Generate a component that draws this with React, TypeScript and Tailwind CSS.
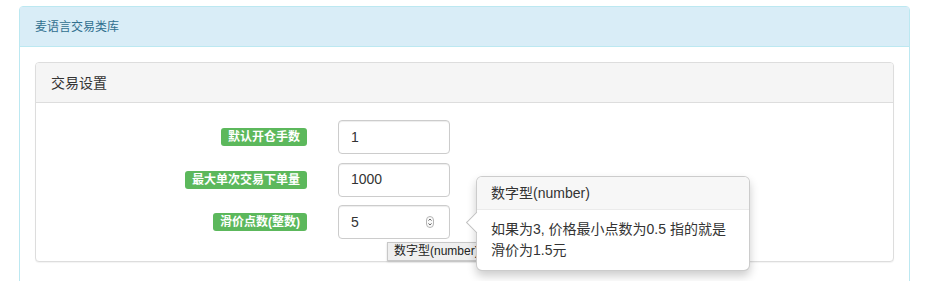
import React from 'react'

const font = "font-['Liberation_Sans','Noto_Sans_CJK_SC',sans-serif]"

interface FieldRowProps {
  label: string
  value: string
  spinner?: boolean
}

function FieldRow({ label, value, spinner }: FieldRowProps) {
  return (
    <div className="flex items-center">
      <div className="flex w-[271px] justify-end">
        <span className="rounded-[3px] bg-[#5cb85c] px-[7px] pt-[3px] pb-[3px] text-[12px] leading-[12px] font-bold text-white">
          {label}
        </span>
      </div>
      <div className="relative ml-[31px] flex h-[34px] w-[112px] items-center rounded-[4px] border border-[#ccc] bg-white px-[12px] text-[14px] text-[#333] shadow-[inset_0_1px_1px_rgba(0,0,0,0.075)]">
        {value}
        {spinner && (
          <svg className="absolute right-[15px] top-[10px]" width="8" height="12" viewBox="0 0 8 12">
            <rect x="0.5" y="0.5" width="7" height="11" rx="3.5" fill="#fafafa" stroke="#b5b5b5" />
            <path d="M2.5 4.6 L4 3 L5.5 4.6" fill="none" stroke="#555" strokeWidth="0.9" />
            <path d="M2.5 7.4 L4 9 L5.5 7.4" fill="none" stroke="#555" strokeWidth="0.9" />
          </svg>
        )}
      </div>
    </div>
  )
}

export default function App() {
  return (
    <div className={`relative h-[281px] w-[926px] overflow-hidden bg-white ${font}`}>
      <div className="ml-[19px] mt-[6px] w-[891px] rounded-t-[4px] border border-[#bce8f1] bg-white">
        <div className="h-[40px] border-b border-[#bce8f1] bg-[#d9edf7] px-[15px] text-[12px] leading-[40px] text-[#31708f]">
          麦语言交易类库
        </div>
        <div className="p-[15px]">
          <div className="mb-[20px] rounded-[4px] border border-[#ddd] bg-white shadow-[0_1px_1px_rgba(0,0,0,0.05)]">
            <div className="h-[40px] rounded-t-[3px] border-b border-[#ddd] bg-[#f5f5f5] px-[15px] text-[14px] leading-[40px] text-[#333]">
              交易设置
            </div>
            <div className="flex flex-col gap-[8.5px] pt-[17px] pb-[22px]">
              <FieldRow label="默认开仓手数" value="1" />
              <FieldRow label="最大单次交易下单量" value="1000" />
              <FieldRow label="滑价点数(整数)" value="5" spinner />
            </div>
          </div>
        </div>
      </div>

      {/* native title tooltip */}
      <div className="absolute left-[387px] top-[242px] h-[19px] border border-[#c8c8c8] bg-[#efefef] px-[6px] text-[12px] leading-[17px] text-[#222] shadow-[0_1px_2px_rgba(0,0,0,0.15)]">
        数字型(number)
      </div>

      {/* popover */}
      <div className="absolute left-[476px] top-[176px] w-[274px] rounded-[6px] border border-[rgba(0,0,0,0.2)] bg-white shadow-[0_5px_10px_rgba(0,0,0,0.2)]">
        <div className="h-[33px] rounded-t-[5px] border-b border-[#ebebeb] bg-[#f7f7f7] px-[14px] text-[14px] leading-[32px] text-[#333]">
          数字型(number)
        </div>
        <div className="px-[14px] py-[9px] text-[14px] leading-[21px] text-[#333]">
          如果为3, 价格最小点数为0.5 指的就是
          <br />
          滑价为1.5元
        </div>
        <div className="absolute left-[-8px] top-[38px] h-[15px] w-[15px] rotate-45 border-b border-l border-[rgba(0,0,0,0.25)] bg-white" />
      </div>
    </div>
  )
}
